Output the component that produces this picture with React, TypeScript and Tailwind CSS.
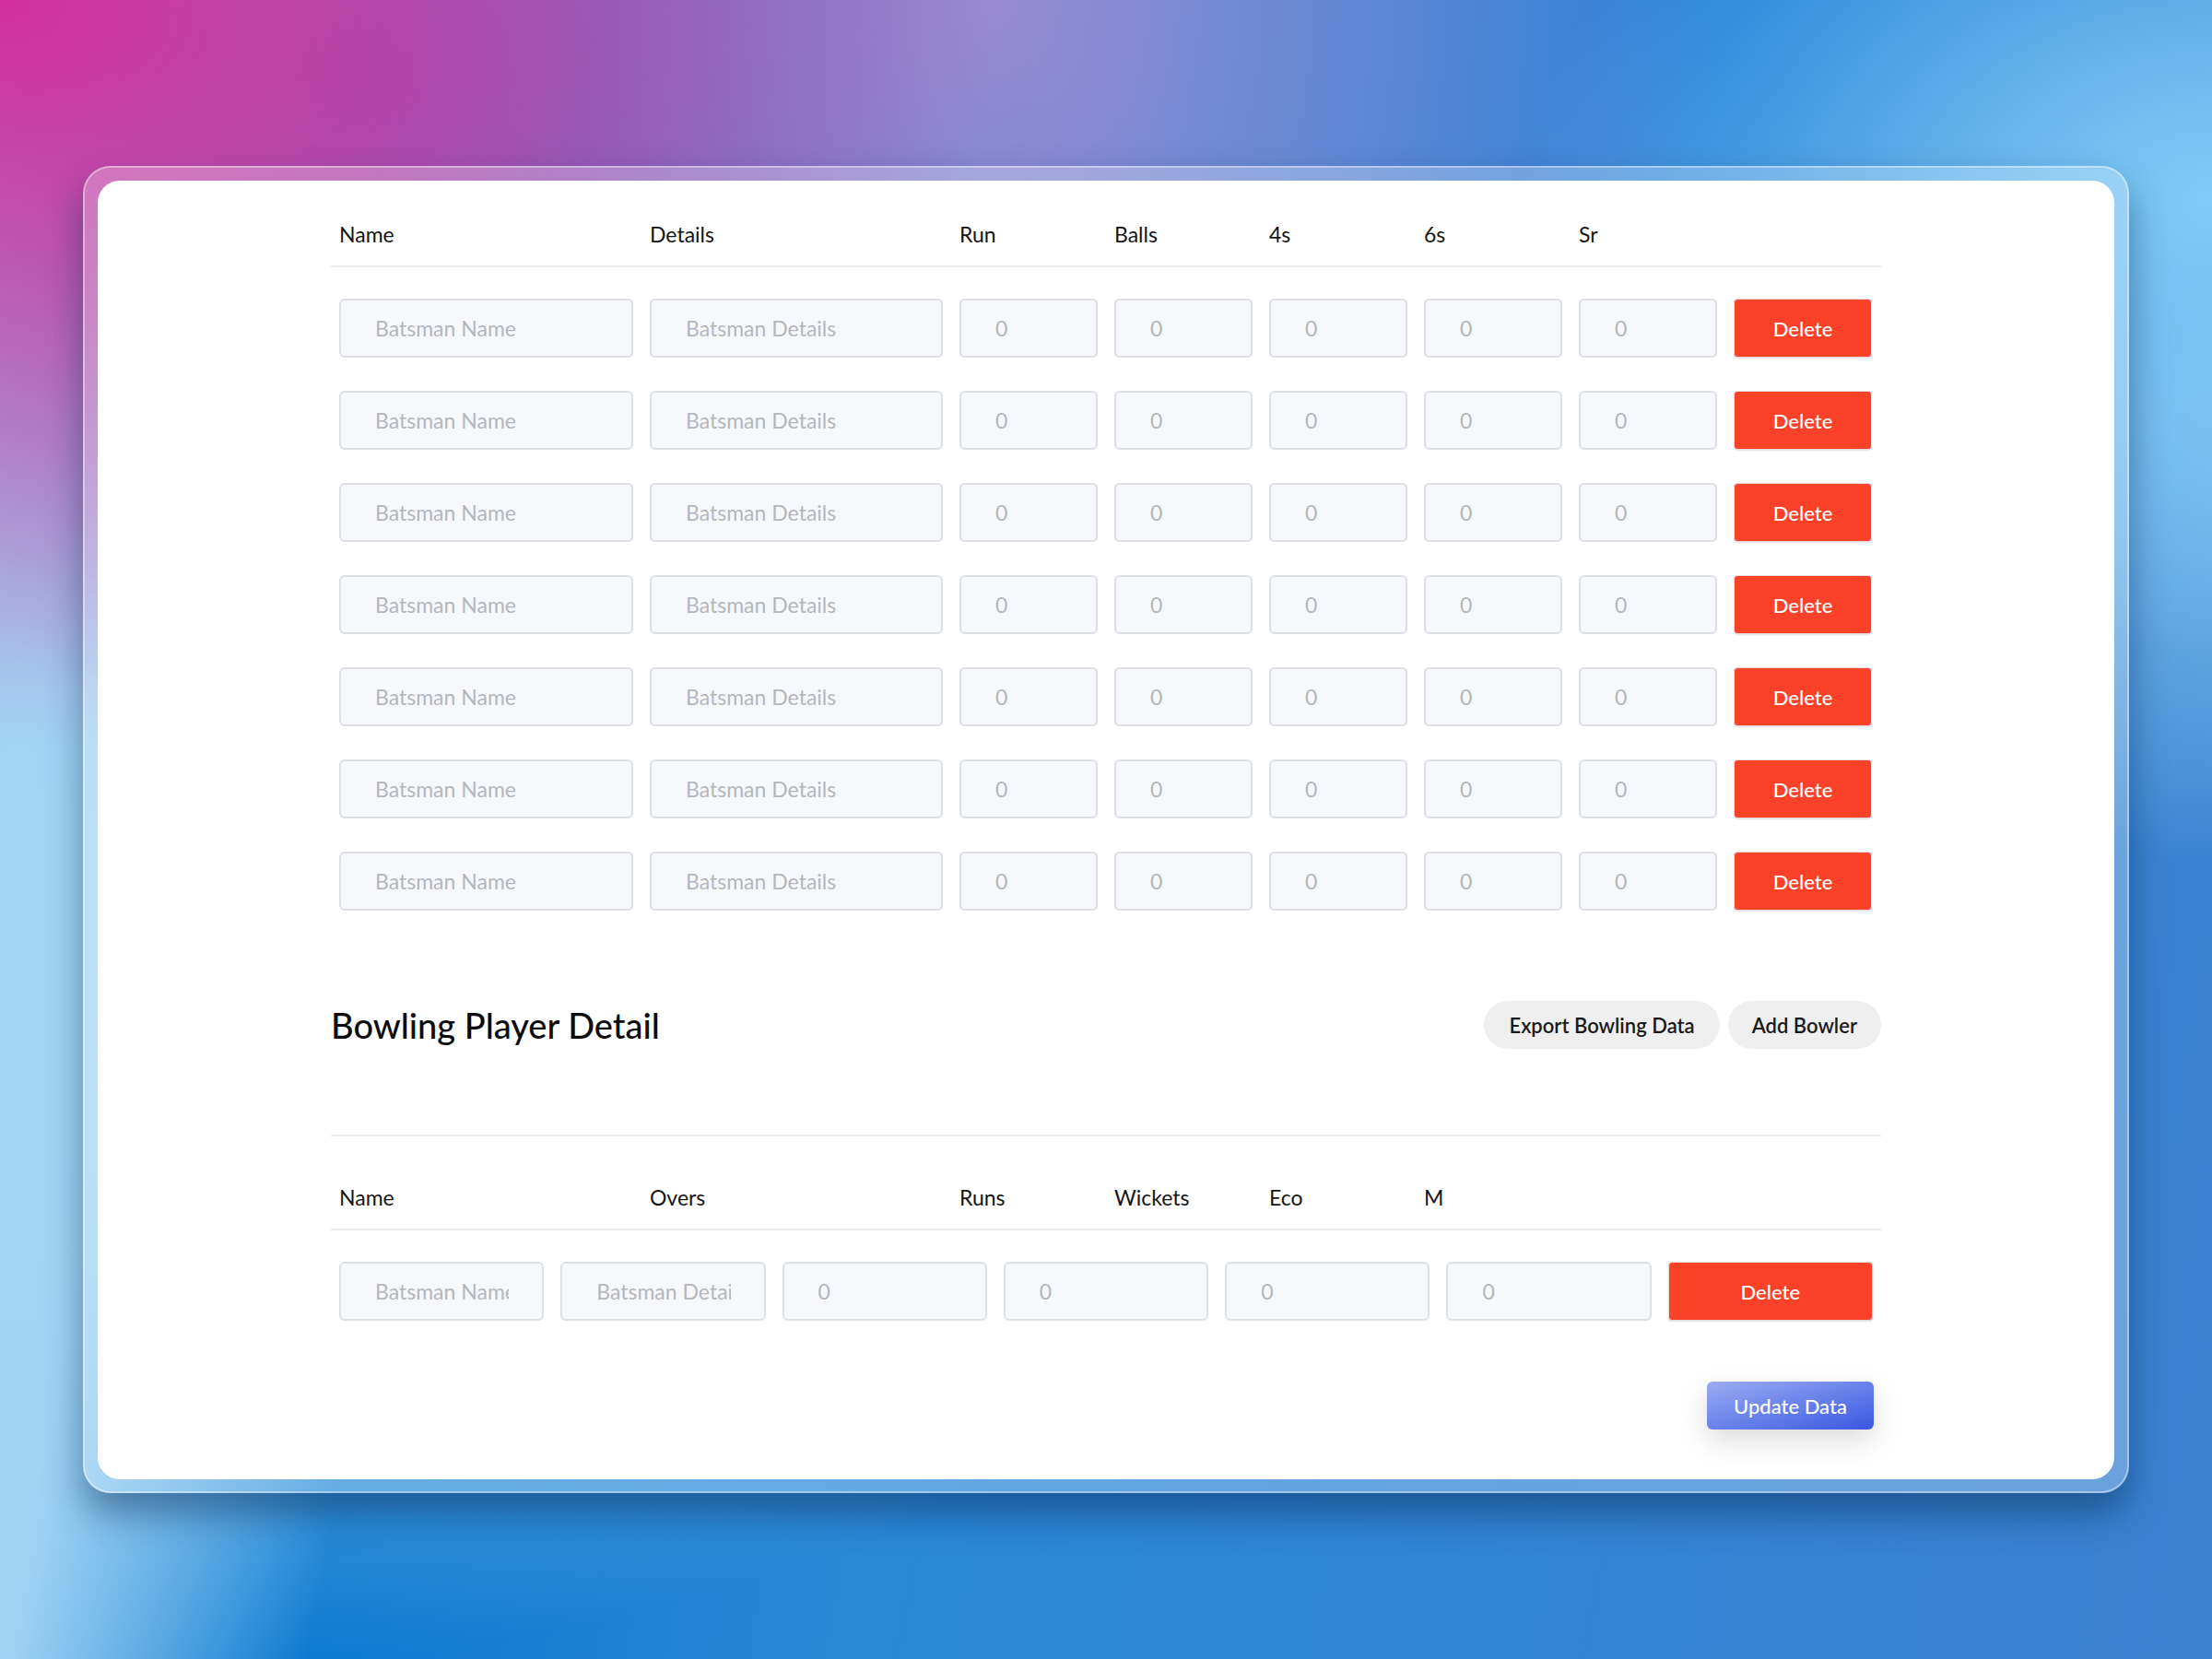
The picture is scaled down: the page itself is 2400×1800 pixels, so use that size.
import React from "react";

const battingHeaders = ["Name", "Details", "Run", "Balls", "4s", "6s", "Sr", ""];
const bowlingHeaders = ["Name", "Overs", "Runs", "Wickets", "Eco", "M", "", ""];

const battingCols =
  "grid grid-cols-[337px_336px_168px_168px_168px_168px_168px_169px]";

const inputCls =
  "w-full h-[64px] rounded-[6px] border-2 border-[#dcdfe4] bg-[#f7f8fb] pl-[37px] pr-[36px] text-[23px] text-[#333] placeholder:text-[#b3b7bd] outline-none";

const DeleteButton = ({ full }: { full?: boolean }) => (
  <button
    className={`${
      full ? "w-full" : "w-[150px]"
    } h-[64px] rounded-[4px] bg-[#fc4129] border border-[#e4ded9] text-white text-[22px] font-medium shadow-[0_1px_2px_rgba(0,0,0,0.12)]`}
  >
    Delete
  </button>
);

const HeaderRow = ({ labels }: { labels: string[] }) => (
  <div className={`${battingCols} items-center h-[70px] border-b-2 border-[#ececec]`}>
    {labels.map((h, i) => (
      <div key={i} className="px-[9px] text-[23px] text-[#151515]">
        {h}
      </div>
    ))}
  </div>
);

const BattingRow = () => (
  <div className={`${battingCols} items-center h-[100px]`}>
    <div className="px-[9px]">
      <input className={inputCls} placeholder="Batsman Name" />
    </div>
    <div className="px-[9px]">
      <input className={inputCls} placeholder="Batsman Details" />
    </div>
    {[0, 1, 2, 3, 4].map((i) => (
      <div key={i} className="px-[9px]">
        <input className={inputCls} placeholder="0" />
      </div>
    ))}
    <div className="px-[9px]">
      <DeleteButton />
    </div>
  </div>
);

const BowlingRow = () => (
  <div className="grid grid-cols-7 items-center h-[100px]">
    <div className="px-[9px]">
      <input className={inputCls} placeholder="Batsman Name" />
    </div>
    <div className="px-[9px]">
      <input className={inputCls} placeholder="Batsman Details" />
    </div>
    {[0, 1, 2, 3].map((i) => (
      <div key={i} className="px-[9px]">
        <input className={inputCls} placeholder="0" />
      </div>
    ))}
    <div className="px-[9px]">
      <DeleteButton full />
    </div>
  </div>
);

export default function App() {
  const rows = [1, 2, 3, 4, 5, 6, 7];
  return (
    <div
      className="min-h-screen h-[1800px] w-full flex items-center justify-center bg-[radial-gradient(ellipse_at_0%_0%,rgba(214,40,152,0.95),transparent_32%),radial-gradient(ellipse_at_45%_0%,rgba(158,140,210,0.95),transparent_42%),radial-gradient(ellipse_at_18%_5%,rgba(130,90,180,0.9),transparent_30%),radial-gradient(ellipse_at_100%_12%,rgba(130,205,248,0.95),transparent_22%),radial-gradient(ellipse_at_80%_4%,rgba(36,128,214,0.95),transparent_36%),radial-gradient(ellipse_at_100%_24%,rgba(170,222,252,0.9),transparent_26%),radial-gradient(ellipse_at_0%_62%,rgba(160,214,246,1),transparent_45%),linear-gradient(100deg,#a2d5f5_0%,#9fd3f4_12%,#0a78d0_24%,#2a88d8_45%,#3a82d0_100%)]"
      style={{ fontFamily: "Lato, 'Noto Sans', sans-serif" }}
    >
      <div className="w-[2220px] rounded-[30px] border-2 border-white/40 bg-white/25 px-[14px] pt-[14px] pb-[13px] shadow-[0_22px_40px_rgba(0,30,70,0.45)]">
        <div className="rounded-[24px] bg-white pt-[24px] pb-[54px]">
          <div className="w-[1682px] mx-auto">
            {/* batting table */}
            <HeaderRow labels={battingHeaders} />
            <div className="pt-[16px]">
              {rows.map((r) => (
                <BattingRow key={r} />
              ))}
            </div>

            {/* bowling section */}
            <div className="mt-[80px] flex items-center justify-between h-[52px]">
              <h2 className="text-[38px] font-medium text-[#0d0d0d]">Bowling Player Detail</h2>
              <div className="flex gap-[9px]">
                <button className="h-[52px] px-[27px] rounded-full bg-[#efefef] text-[22px] font-semibold text-[#1a1a1a]">
                  Export Bowling Data
                </button>
                <button className="h-[52px] px-[26px] rounded-full bg-[#efefef] text-[22px] font-semibold text-[#1a1a1a]">
                  Add Bowler
                </button>
              </div>
            </div>

            <div className="mt-[93px] border-t-2 border-[#ececec] pt-[32px]">
              <HeaderRow labels={bowlingHeaders} />
              <div className="pt-[16px]">
                <BowlingRow />
              </div>
            </div>

            <div className="mt-[48px] flex justify-end pr-[8px]">
              <button className="h-[52px] w-[181px] rounded-[6px] bg-gradient-to-br from-[#9dabf3] to-[#3b56e0] text-white text-[22px] font-medium shadow-[0_12px_30px_rgba(0,0,0,0.14)]">
                Update Data
              </button>
            </div>
          </div>
        </div>
      </div>
    </div>
  );
}
